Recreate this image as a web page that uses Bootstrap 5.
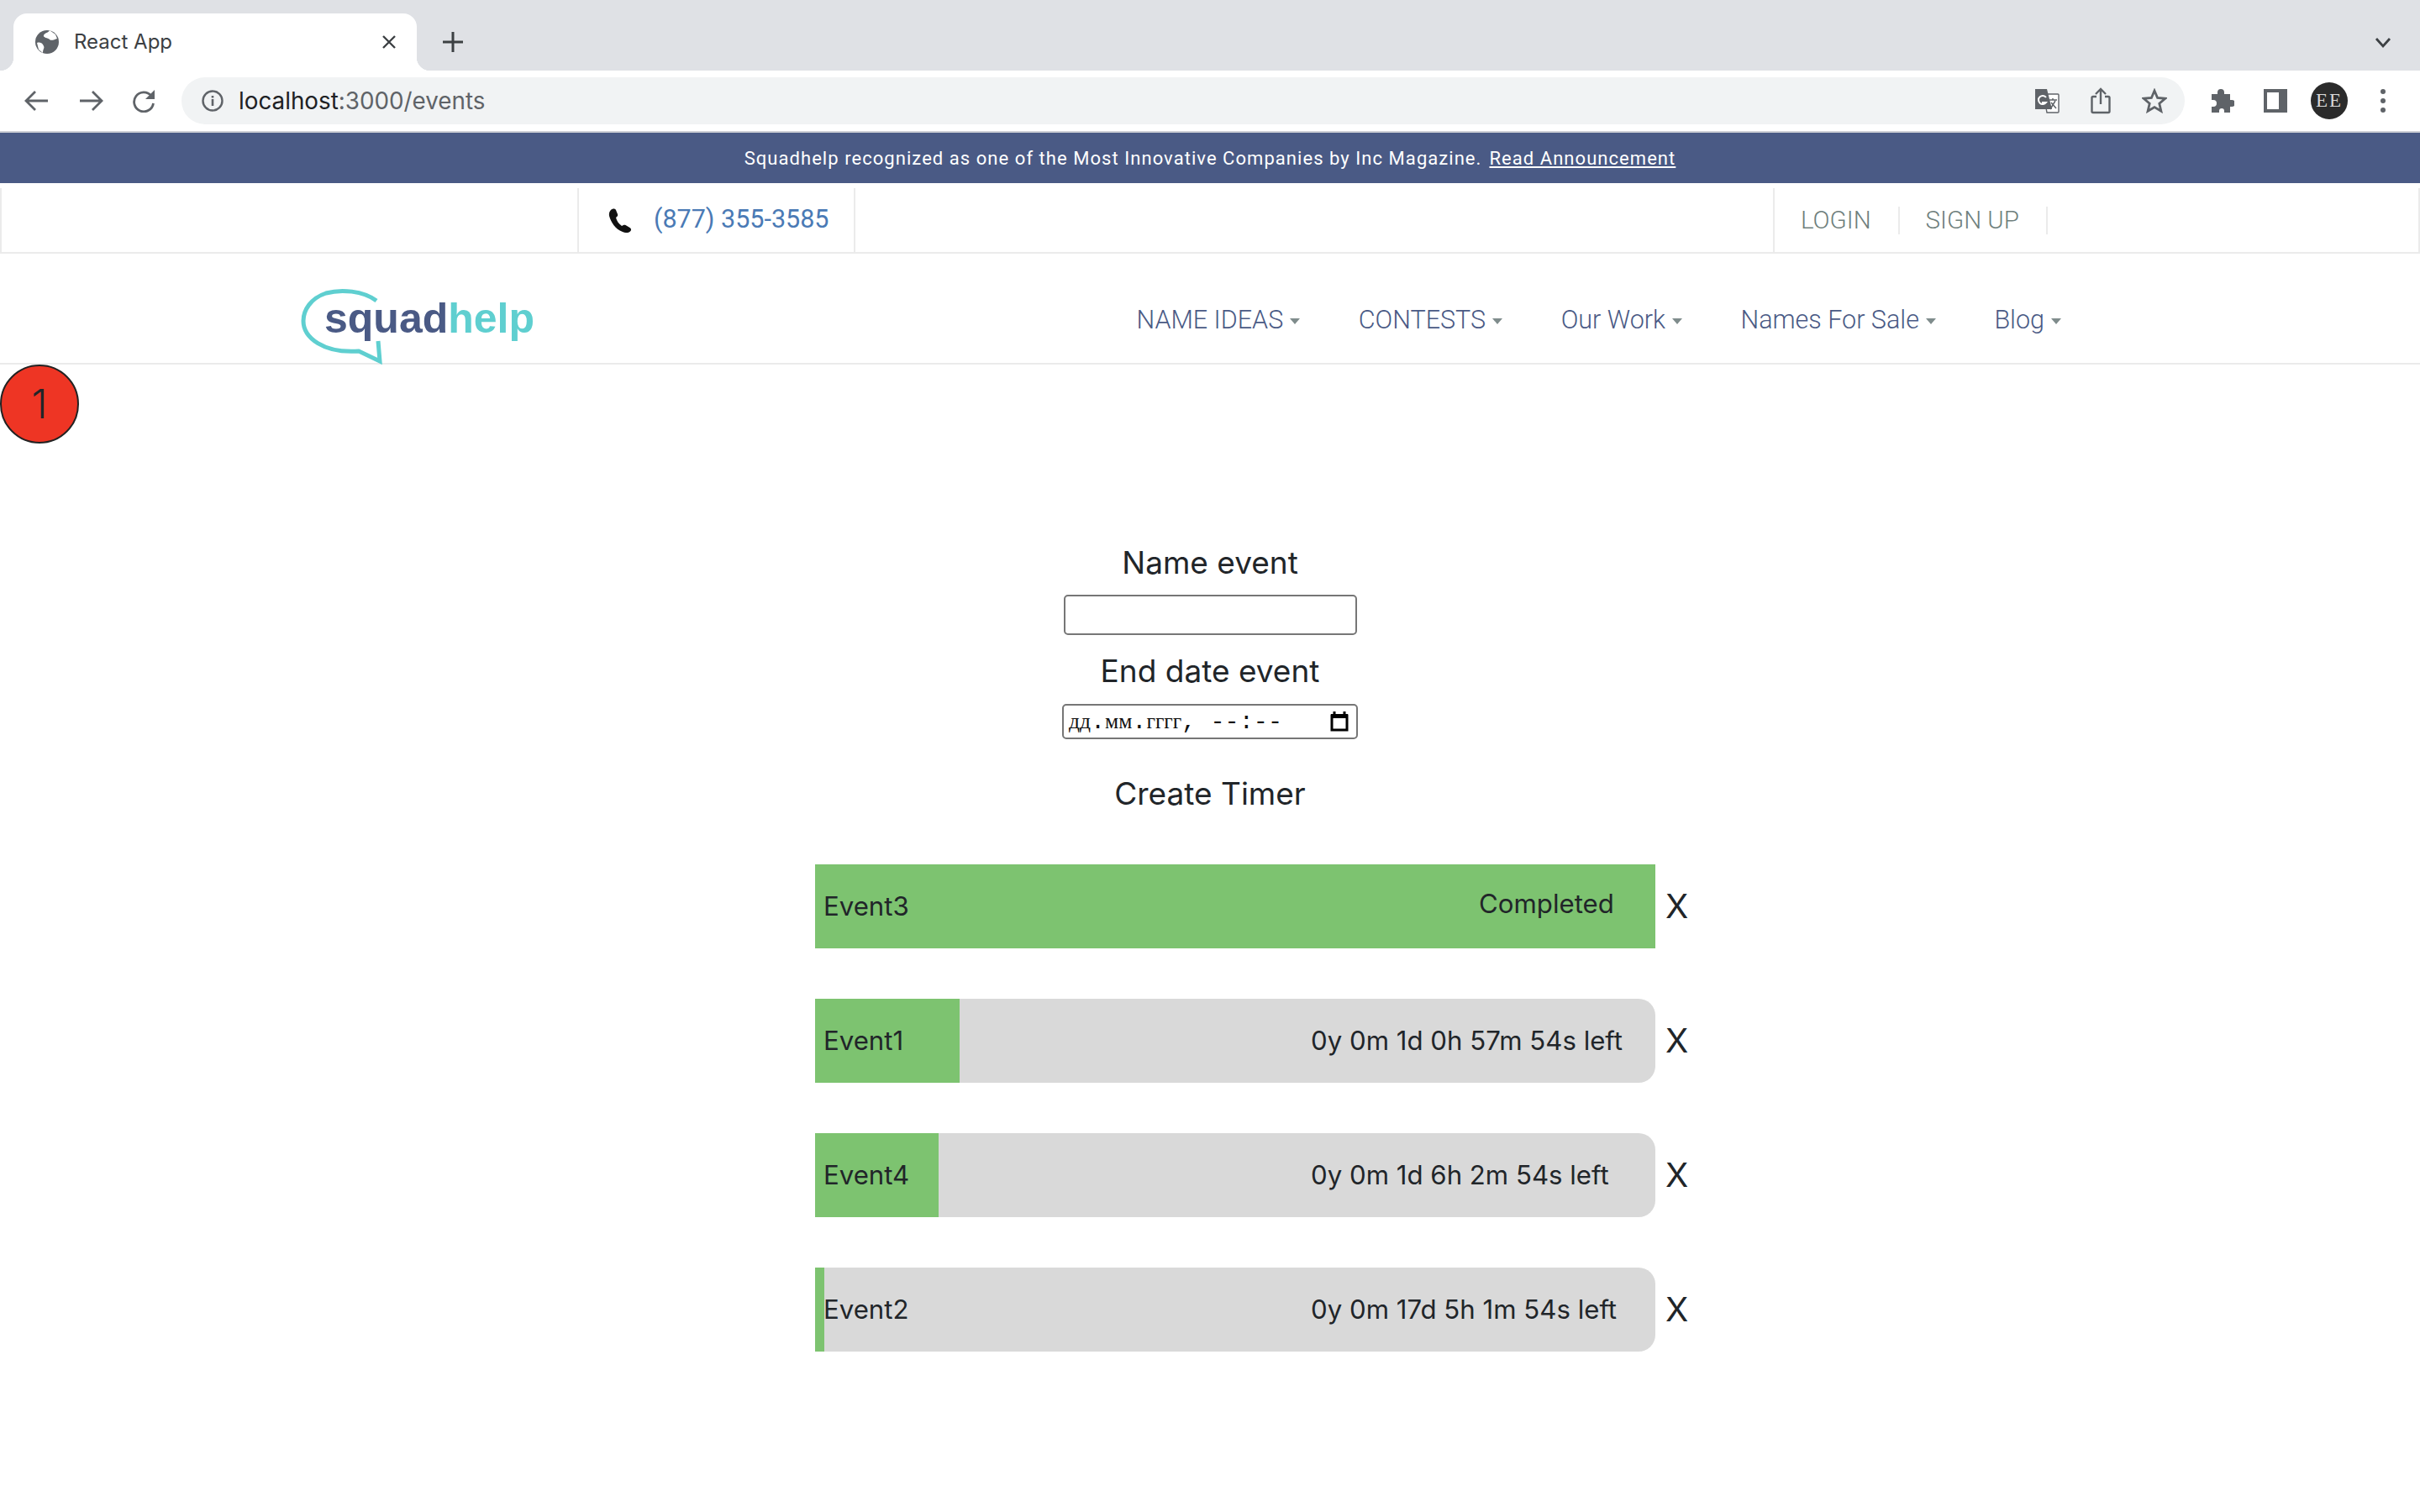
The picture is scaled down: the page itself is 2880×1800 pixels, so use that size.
<!DOCTYPE html>
<html lang="en">
<head>
    <meta charset="UTF-8">
    <meta name="viewport" content="width=device-width, initial-scale=1.0">
    <title>React App</title>
    <link rel="stylesheet" href="https://cdn.jsdelivr.net/npm/bootstrap@5.3.0/dist/css/bootstrap.min.css">
    <style>
        body { background: #fff; font-family: Inter, "Liberation Sans", sans-serif; color: #212529; min-height: 1800px; }

        /* browser chrome */
        .tab-strip { height: 84px; background: #dfe1e5; padding: 16px 0 0 16px; }
        .chrome-tab { width: 480px; height: 68px; background: #fff; border-radius: 16px 16px 0 0; padding: 0 24px 0 26px; position: relative; color: #3c4043; font-size: 24px; }
        .chrome-tab::before, .chrome-tab::after { content: ""; position: absolute; bottom: 0; width: 16px; height: 16px; }
        .chrome-tab::before { left: -16px; background: radial-gradient(circle at 0 0, #dfe1e5 16px, #fff 16.5px); }
        .chrome-tab::after { right: -16px; background: radial-gradient(circle at 100% 0, #dfe1e5 16px, #fff 16.5px); }
        .tab-title { margin-left: 18px; }
        .tab-plus { margin-left: 30px; }
        .tab-chevron { margin: 28px 34px 0 0; }
        .toolbar { height: 72px; background: #fff; padding: 8px 0 8px 28px; border-bottom: 0; }
        .nav-btns { gap: 32px; width: 188px; }
        .omnibox { width: 2384px; height: 56px; background: #f1f3f4; border-radius: 28px; padding: 0 21px 0 24px; font-size: 27.8px; color: #5f6368; }
        .omnibox b { font-weight: 400; color: #202124; }
        .omni-url { margin-left: 18px; margin-top: 1px; }
        .omni-icons { gap: 37px; }
        .tool-icons { margin-left: 29px; gap: 35px; }
        .avatar-ee { width: 44px; height: 44px; margin-left: -7px; border-radius: 50%; background: #2b2b2b; color: #d8d8d8; font: 23px "Liberation Serif", serif; letter-spacing: 2px; }
        .tool-dots { margin-left: 1px; }

        /* page header */
        .promo-bar { height: 62px; border-top: 2px solid #ced0d6; background: #4a5a85; color: #fff; font: 22px Roboto, sans-serif; letter-spacing: 1.05px; }
        .promo-bar a { color: #fff; margin-left: 9px; }
        .top-wrap { padding-top: 6px; }
        .top-bar { height: 78px; border: 2px solid #ebebeb; border-top: 0; }
        .top-left { width: 687px; border-right: 2px solid #ebebeb; }
        .top-phone { width: 329px; border-right: 2px solid #ebebeb; padding-left: 35px; gap: 24px; }
        .top-phone a { color: #4a7ab5; font: 400 30.5px/1 Roboto, sans-serif; text-decoration: none; margin-top: -2px; }
        .top-auth { width: 768px; border-left: 2px solid #ebebeb; padding-left: 31px; }
        .top-auth a { color: #6f7f7d; font: 300 29.5px Roboto, sans-serif; text-decoration: none; padding-right: 32px; margin-right: 31px; border-right: 2px solid #ebebeb; line-height: 33px; }
        .main-nav { height: 132px; border-bottom: 2px solid #ebebeb; padding: 26px 427px 0 356px; }
        .main-nav .nav { gap: 69.5px; }
        .main-nav .nav-link { padding: 0; color: #4a5a85; font: 300 30.5px Roboto, sans-serif; }
        .main-nav .dropdown-toggle::after { margin-left: 8px; vertical-align: 5px; border-top: 7px solid #7f8c8c; border-right: 6px solid transparent; border-left: 6px solid transparent; border-bottom: 0; }
        .brand-logo { margin-top: 16px; }

        /* events page */
        .notify-badge { width: 94px; height: 94px; border-radius: 50%; background: #ee3524; border: 2px solid #222; font-size: 48px; font-weight: 300; line-height: 1; }
        .event-form { margin-top: 119px; }
        .field-label { font-size: 37px; line-height: 46px; margin: 0; color: #212529; }
        .name-input { width: 349px; height: 48px; border: 2px solid #767676; border-radius: 5px; margin: 15px 0 20px; padding: 0; }
        .date-input { width: 352px; height: 42px; border: 2px solid #767676; border-radius: 5px; margin: 16px 0 42px; padding: 0 9px 0 6px; font: 28.5px/1 "Liberation Mono", monospace; color: #111; }
        .date-input i { font: 25.5px "Liberation Serif", serif; }
        .timers { width: 1050px; margin: 61px 0 0 110px; gap: 60px; }
        .timer-row { gap: 12px; font-size: 31.2px; }
        .timer-track { width: 1000px; height: 100px; background: #d9d9d9; border-radius: 0 20px 20px 0; overflow: hidden; }
        .timer-track.is-done { border-radius: 0; }
        .timer-fill { top: 0; bottom: 0; left: 0; background: #7dc370; }
        .timer-body { padding-left: 10px; }
        .timer-time { width: 410px; }
        .timer-done { width: 410px; padding-left: 200px; margin-top: -5px; }
        .timer-x { font-size: 40px; line-height: 1; color: #212529; }
    </style>
</head>
<body>
    <div class="tab-strip d-flex align-items-start justify-content-between">
        <div class="d-flex align-items-center">
            <div class="chrome-tab d-flex align-items-center">
                <svg width="28" height="28" viewBox="0 0 28 28">
                    <circle cx="14" cy="14" r="14" fill="#5f6368"/>
                    <path d="M17 0c-1 3-6 3-7 6s5 3 7 5 6 0 9-1l-2-5zM2 15c3-1 6 0 7 2s2 3 1 5-1 4-1 5l-5-4z" fill="#fff"/>
                </svg>
                <span class="tab-title flex-grow-1">React App</span>
                <svg width="18" height="18" viewBox="0 0 18 18"><path d="M2 2l14 14M16 2L2 16" stroke="#3c4043" stroke-width="2.4"/></svg>
            </div>
            <svg class="tab-plus" width="26" height="26" viewBox="0 0 26 26"><path d="M13 1v24M1 13h24" stroke="#3c4043" stroke-width="3"/></svg>
        </div>
        <svg class="tab-chevron" width="20" height="14" viewBox="0 0 20 14"><path d="M2 2l8 9 8-9" fill="none" stroke="#3c4043" stroke-width="2.8"/></svg>
    </div>

    <div class="toolbar d-flex align-items-center">
        <div class="nav-btns d-flex align-items-center">
            <svg width="32" height="28" viewBox="0 0 32 28"><path d="M29 14H4M14 3L3 14l11 11" fill="none" stroke="#5f6368" stroke-width="2.8"/></svg>
            <svg width="32" height="28" viewBox="0 0 32 28"><path d="M3 14h25M18 3l11 11-11 11" fill="none" stroke="#5f6368" stroke-width="2.8"/></svg>
            <svg width="32" height="28" viewBox="0 0 32 28"><path d="M24 8a11.5 11.5 0 1 0 2.5 9" fill="none" stroke="#5f6368" stroke-width="2.8"/><path d="M28 1v11H17z" fill="#5f6368"/></svg>
        </div>
        <div class="omnibox d-flex align-items-center justify-content-between">
            <div class="d-flex align-items-center">
                <svg width="26" height="26" viewBox="0 0 26 26"><circle cx="13" cy="13" r="11.5" fill="none" stroke="#5f6368" stroke-width="2.4"/><path d="M13 11v8M13 7v2.4" stroke="#5f6368" stroke-width="2.6"/></svg>
                <span class="omni-url"><b>localhost</b>:3000/events</span>
            </div>
            <div class="omni-icons d-flex align-items-center">
                <svg width="30" height="30" viewBox="0 0 30 30">
                    <path d="M11 7h17a1 1 0 0 1 1 1v20a1 1 0 0 1-1 1H15z" fill="#fff" stroke="#5f6368" stroke-width="1.4"/>
                    <path d="M1 1h14l6 24H1z" fill="#5f6368"/>
                    <path d="M14 11a5 5 0 1 0 0 6h-5" fill="none" stroke="#fff" stroke-width="2"/>
                    <path d="M18 14h9M22 12v2M19 25l6-10M20 17l6 7" stroke="#5f6368" stroke-width="1.5"/>
                </svg>
                <svg width="24" height="32" viewBox="0 0 24 32"><path d="M7 11H3a1.500 1.500 0 0 0-1.500 1.500v16A1.500 1.500 0 0 0 3 30h18a1.500 1.500 0 0 0 1.500-1.500v-16A1.500 1.500 0 0 0 21 11h-4M12 20V2M6 8l6-6 6 6" fill="none" stroke="#5f6368" stroke-width="2.4"/></svg>
                <svg width="30" height="30" viewBox="0 0 30 30"><path d="M15 3l3.600 8.500 9.200.8-7 6 2.100 9-7.900-4.700-7.900 4.700 2.100-9-7-6 9.200-.8z" fill="none" stroke="#5f6368" stroke-width="2.800"/></svg>
            </div>
        </div>
        <div class="tool-icons d-flex align-items-center">
            <svg width="30" height="30" viewBox="0 0 30 30"><path d="M3 7h7V5a4 4 0 0 1 8 0v2h7v7h2a4 4 0 0 1 0 8h-2v7h-7v-2a3 3 0 0 0-6 0v2H3v-7h2a4 4 0 0 0 0-8H3z" fill="#5f6368"/></svg>
            <svg width="28" height="28" viewBox="0 0 28 28"><path d="M0 0h28v28H0z" fill="#5f6368"/><path d="M4 4h14v20H4z" fill="#fff"/></svg>
            <div class="avatar-ee d-flex align-items-center justify-content-center">EE</div>
            <svg class="tool-dots" width="12" height="30" viewBox="0 0 12 30"><circle cx="6" cy="4" r="3" fill="#5f6368"/><circle cx="6" cy="15" r="3" fill="#5f6368"/><circle cx="6" cy="26" r="3" fill="#5f6368"/></svg>
        </div>
    </div>

    <div class="promo-bar d-flex align-items-center justify-content-center">
        <span>Squadhelp recognized as one of the Most Innovative Companies by Inc Magazine.</span>
        <a href="#">Read Announcement</a>
    </div>

    <div class="top-wrap">
        <div class="top-bar d-flex">
            <div class="top-left"></div>
            <div class="top-phone d-flex align-items-center">
                <svg width="30" height="30" viewBox="0 0 30 30"><path d="M3 3c2-2 5-2 6 0l2 5c.5 1.500 0 2.500-2 4 1 4 3 7 7 10 2-1 3-1.500 4.500-1l5 3c2 1.500 2 3 .5 4.500-2 2-5 2-9 .5C8 26 3 17 1 10 .5 7 1.500 4.500 3 3z" fill="#111"/></svg>
                <a href="#">(877) 355-3585</a>
            </div>
            <div class="flex-grow-1"></div>
            <div class="top-auth d-flex align-items-center">
                <a href="#">LOGIN</a>
                <a href="#">SIGN UP</a>
            </div>
        </div>
    </div>

    <nav class="main-nav d-flex align-items-center justify-content-between">
        <svg class="brand-logo" width="284" height="92" viewBox="0 0 284 92">
            <path d="M92 16C76 4 50 2 32 7 14 13 5 27 5 40c0 20 24 39 66 36l25 12-2-24" fill="none" stroke="#5fcfd0" stroke-width="5"/>
            <text x="30" y="54" font-family="Liberation Sans, sans-serif" font-size="50" font-weight="700" fill="#4a5a85">squad<tspan fill="#5fcfd0">help</tspan></text>
        </svg>
        <ul class="nav">
            <li class="nav-item"><a class="nav-link dropdown-toggle" href="#">NAME IDEAS</a></li>
            <li class="nav-item"><a class="nav-link dropdown-toggle" href="#">CONTESTS</a></li>
            <li class="nav-item"><a class="nav-link dropdown-toggle" href="#">Our Work</a></li>
            <li class="nav-item"><a class="nav-link dropdown-toggle" href="#">Names For Sale</a></li>
            <li class="nav-item"><a class="nav-link dropdown-toggle" href="#">Blog</a></li>
        </ul>
    </nav>

    <div class="notify-badge d-flex align-items-center justify-content-center">1</div>

    <main class="d-flex flex-column align-items-center">
        <form class="event-form d-flex flex-column align-items-center" onsubmit="return false">
            <label class="field-label" for="eventName">Name event</label>
            <input class="name-input" id="eventName" type="text">
            <label class="field-label">End date event</label>
            <div class="date-input d-flex align-items-center justify-content-between">
                <span><i>дд</i>.<i>мм</i>.<i>гггг</i>, --:--</span>
                <svg width="22" height="24" viewBox="0 0 22 24"><path d="M2 5h18v17H2z" fill="#fff" stroke="#000" stroke-width="3"/><path d="M1 3h20v5H1z" fill="#000"/><path d="M5 0v4M17 0v4" stroke="#000" stroke-width="3"/></svg>
            </div>
            <div class="field-label">Create Timer</div>
        </form>

        <div id="timers" class="timers d-flex flex-column"></div>
    </main>

    <script src="https://cdn.jsdelivr.net/npm/bootstrap@5.3.0/dist/js/bootstrap.bundle.min.js"></script>
    <script>
        const events = [
            { name: "Event3", done: true, fill: 100 },
            { name: "Event1", left: "0y 0m 1d 0h 57m 54s left", fill: 17.2 },
            { name: "Event4", left: "0y 0m 1d 6h 2m 54s left", fill: 14.7 },
            { name: "Event2", left: "0y 0m 17d 5h 1m 54s left", fill: 1.1 }
        ];

        document.getElementById("timers").innerHTML = events.map((ev) => `
            <div class="timer-row d-flex align-items-center">
                <div class="timer-track position-relative ${ev.done ? "is-done" : ""}">
                    <div class="timer-fill position-absolute" style="width: ${ev.fill}%"></div>
                    <div class="timer-body position-relative h-100 d-flex align-items-center justify-content-between">
                        <span>${ev.name}</span>
                        ${ev.done ? `<span class="timer-done">Completed</span>` : `<span class="timer-time">${ev.left}</span>`}
                    </div>
                </div>
                <span class="timer-x">X</span>
            </div>`).join("");
    </script>
</body>
</html>
